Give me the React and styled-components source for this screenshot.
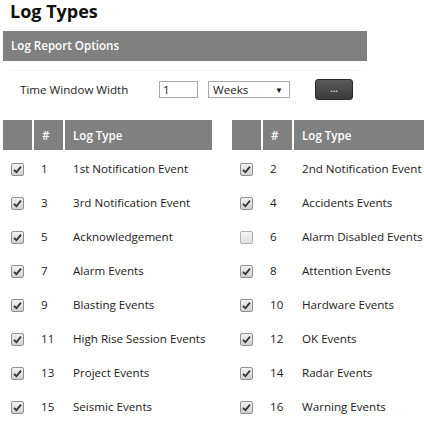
import React from 'react';
import styled, { createGlobalStyle } from 'styled-components';

const Global = createGlobalStyle`
  html, body {
    margin: 0;
    padding: 0;
    background: #fff;
    overflow: hidden;
  }
  body {
    font-family: "Open Sans", "Noto Sans", sans-serif;
    color: #222;
  }
`;

const Page = styled.div`
  width: 424px;
  height: 422px;
  padding-left: 3px;
  box-sizing: border-box;
  overflow: hidden;
`;

const Title = styled.h2`
  margin: 0;
  padding: 0 0 0 7px;
  height: 31px;
  line-height: 23px;
  font-size: 18px;
  font-weight: 700;
  color: #111;
`;

const SectionBar = styled.div`
  width: 364px;
  height: 30px;
  background: #808080;
  color: #fff;
  font-size: 11.6px;
  font-weight: 600;
  line-height: 30px;
  padding-left: 8px;
  box-sizing: border-box;
`;

const Divider = styled.div`
  margin: 9px 0 0 7px;
  width: 351px;
  border-top: 1px solid #f4f4f4;
`;

const OptionsRow = styled.div`
  display: flex;
  align-items: center;
  height: 22px;
  margin-top: 7px;
  font-size: 11.6px;
`;

const Label = styled.span`
  margin-left: 17px;
  width: 139px;
`;

const TextInput = styled.div`
  width: 39px;
  height: 17px;
  box-sizing: border-box;
  border: 1px solid #a9a9a9;
  padding-left: 3px;
  line-height: 15px;
`;

const Select = styled.div`
  margin-left: 10px;
  width: 82px;
  height: 17px;
  box-sizing: border-box;
  border: 1px solid #a9a9a9;
  padding: 0 6px 0 4px;
  line-height: 15px;
  display: flex;
  justify-content: space-between;
  align-items: center;
`;

const Arrow = styled.span`
  font-size: 8px;
  color: #111;
`;

const DotsButton = styled.div`
  margin-left: 25px;
  width: 38px;
  height: 21px;
  box-sizing: border-box;
  border: 1px solid #2a2a2a;
  border-radius: 3px;
  background: linear-gradient(#5a5a5a, #3b3b3b);
  color: #fff;
  font-size: 10px;
  text-align: center;
  line-height: 17px;
`;

const Tables = styled.div`
  display: flex;
  gap: 20px;
  margin-top: 20px;
`;

const Table = styled.table`
  border-collapse: separate;
  border-spacing: 2px;
  margin: -2px;
  table-layout: fixed;
  width: ${(p) => p.$width}px;
  flex: none;
  font-size: 11.6px;
`;

const Th = styled.th`
  box-sizing: border-box;
  background: #808080;
  color: #fff;
  height: 30px;
  padding: 0 0 0 ${(p) => p.$pad || 0}px;
  font-weight: 600;
  text-align: left;
  white-space: nowrap;
`;

const Td = styled.td`
  height: 32px;
  padding: 0 0 0 ${(p) => p.$pad || 0}px;
  white-space: nowrap;
  overflow: hidden;
  vertical-align: middle;
`;

const Box = styled.span`
  display: inline-flex;
  align-items: center;
  justify-content: center;
  width: 13px;
  height: 13px;
  box-sizing: border-box;
  border: 1px solid ${(p) => (p.$checked ? '#8f8f8f' : '#b0b0b0')};
  border-radius: 2px;
  background: ${(p) =>
    p.$checked ? 'linear-gradient(#f2f2f2, #cfcfcf)' : 'linear-gradient(#f4f4f4, #dedede)'};
  vertical-align: middle;
`;

const Check = ({ checked }) => (
  <Box $checked={checked}>
    {checked && (
      <svg width="9" height="9" viewBox="0 0 9 9">
        <path d="M1 4.8 L3.4 7.2 L8 1.6" stroke="#333" strokeWidth="1.8" fill="none" />
      </svg>
    )}
  </Box>
);

const left = [
  [1, '1st Notification Event', true],
  [3, '3rd Notification Event', true],
  [5, 'Acknowledgement', true],
  [7, 'Alarm Events', true],
  [9, 'Blasting Events', true],
  [11, 'High Rise Session Events', true],
  [13, 'Project Events', true],
  [15, 'Seismic Events', true],
];

const right = [
  [2, '2nd Notification Event', true],
  [4, 'Accidents Events', true],
  [6, 'Alarm Disabled Events', false],
  [8, 'Attention Events', true],
  [10, 'Hardware Events', true],
  [12, 'OK Events', true],
  [14, 'Radar Events', true],
  [16, 'Warning Events', true],
];

const LogTable = ({ rows, width }) => (
  <Table $width={width}>
    <colgroup>
      <col style={{ width: 29 }} />
      <col style={{ width: 29 }} />
      <col />
    </colgroup>
    <thead>
      <tr>
        <Th />
        <Th $pad={8}>#</Th>
        <Th $pad={8}>Log Type</Th>
      </tr>
    </thead>
    <tbody>
      {rows.map(([n, name, on]) => (
        <tr key={n}>
          <Td $pad={8}>
            <Check checked={on} />
          </Td>
          <Td $pad={7}>{n}</Td>
          <Td $pad={8}>{name}</Td>
        </tr>
      ))}
    </tbody>
  </Table>
);

export default function App() {
  return (
    <Page>
      <Global />
      <Title>Log Types</Title>
      <SectionBar>Log Report Options</SectionBar>
      <Divider />
      <OptionsRow>
        <Label>Time Window Width</Label>
        <TextInput>1</TextInput>
        <Select>
          Weeks
          <Arrow>▼</Arrow>
        </Select>
        <DotsButton>...</DotsButton>
      </OptionsRow>
      <Tables>
        <LogTable rows={left} width={213} />
        <LogTable rows={right} width={196} />
      </Tables>
    </Page>
  );
}
